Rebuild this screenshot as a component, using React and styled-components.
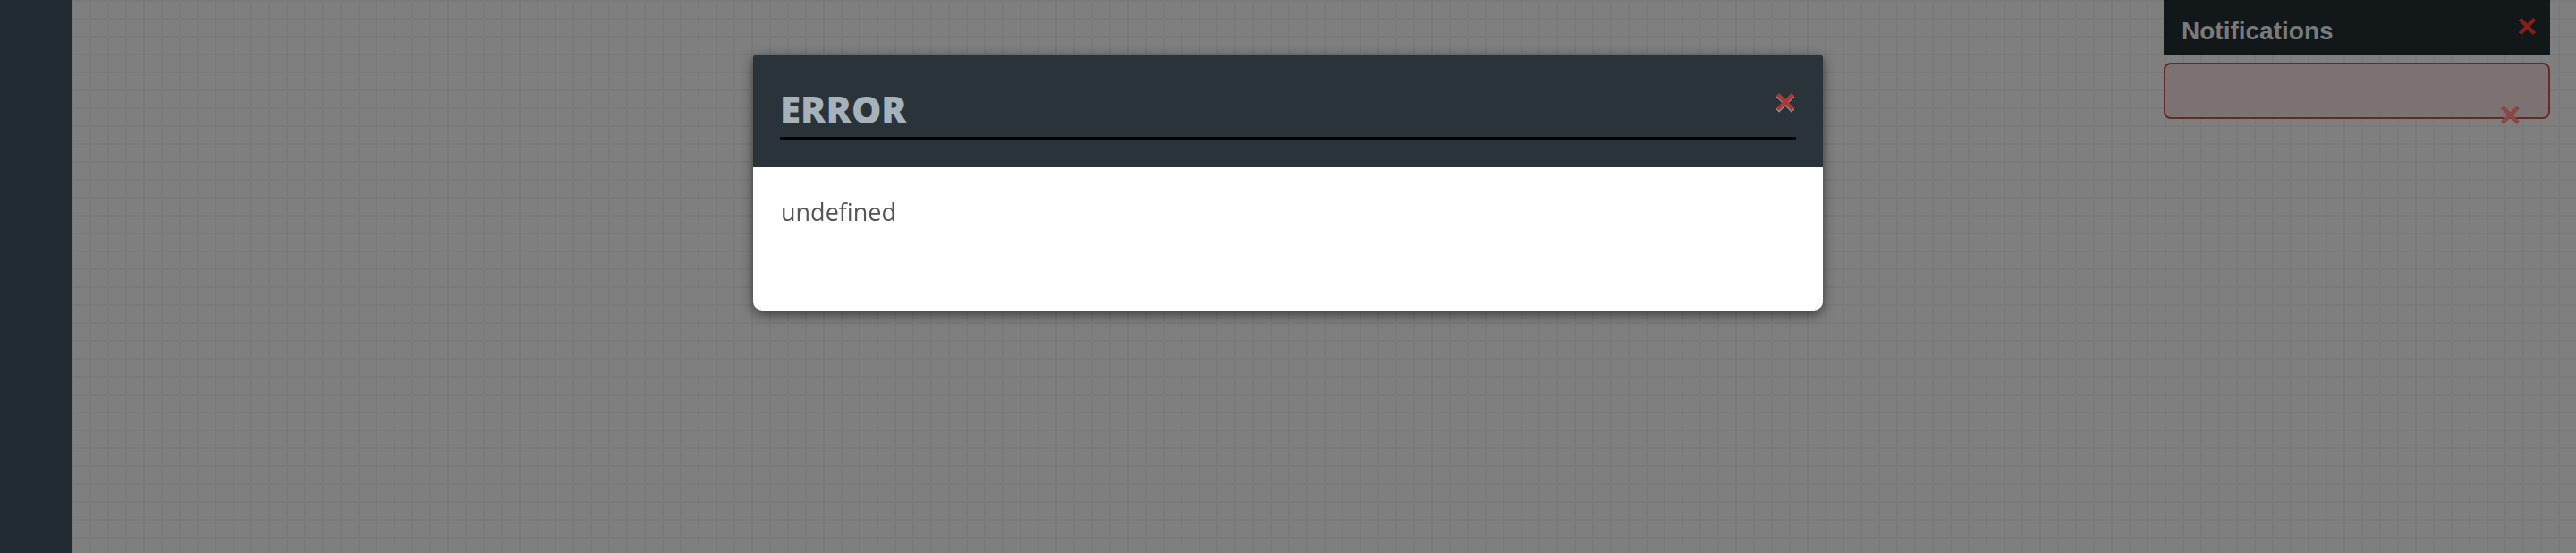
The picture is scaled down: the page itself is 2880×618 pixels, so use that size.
import React from "react";
import styled, { createGlobalStyle } from "styled-components";

const Global = createGlobalStyle`
  html, body { margin: 0; padding: 0; }
  body { font-family: "Open Sans", "Liberation Sans", sans-serif; }
  * { box-sizing: border-box; }
`;

const Page = styled.div`
  position: relative;
  display: flex;
  width: 100%;
  height: 100vh;
  overflow: hidden;
`;

const Sidebar = styled.aside`
  flex: 0 0 80px;
  background: #232b32;
`;

const Canvas = styled.main`
  flex: 1;
  background-color: #7f7f7f;
  background-image:
    linear-gradient(to right, #7a7a7a 2px, transparent 2px),
    linear-gradient(to bottom, #7a7a7a 2px, transparent 2px);
  background-size: 20px 20px;
`;

const NotificationPanel = styled.section`
  position: absolute;
  top: 0;
  right: 29px;
  width: 432px;
  display: flex;
  flex-direction: column;
  gap: 8px;
`;

const NotificationHeader = styled.header`
  height: 62px;
  background: #12171a;
  display: flex;
  justify-content: space-between;
  align-items: flex-start;
  padding: 19px 16px 0 20px;
`;

const NotificationTitle = styled.h2`
  margin: 0;
  font-family: "Liberation Sans", Arial, sans-serif;
  font-weight: 700;
  font-size: 28px;
  line-height: 32px;
  color: #7a7a7a;
`;

const IconButton = styled.button`
  border: 0;
  padding: 0;
  background: none;
  display: block;
  cursor: pointer;
  line-height: 0;
`;

const HeaderClose = styled(IconButton)`
  margin-top: 1px;
`;

const NotificationItem = styled.div`
  position: relative;
  height: 63px;
  border: 2px solid #6a2826;
  border-radius: 8px;
  background: #7b7271;
`;

const ItemClose = styled(IconButton)`
  position: absolute;
  left: 375px;
  top: 46px;
`;

const ModalLayer = styled.div`
  position: fixed;
  inset: 0;
  display: flex;
  justify-content: center;
  align-items: flex-start;
  padding-top: 61px;
`;

const Modal = styled.div`
  width: 1196px;
  border-radius: 3px 3px 10px 10px;
  overflow: hidden;
  background: #fff;
  box-shadow: 0 4px 14px rgba(0, 0, 0, 0.55);
`;

const ModalHeader = styled.div`
  position: relative;
  background: #2b333a;
  padding: 40px 30px 30px;
`;

const ModalTitle = styled.h1`
  margin: 0;
  font-family: "Open Sans", sans-serif;
  font-weight: 800;
  font-size: 42px;
  line-height: 42px;
  color: #a6b2ba;
  padding-bottom: 10px;
  border-bottom: 4px solid #000;
`;

const ModalClose = styled(IconButton)`
  position: absolute;
  top: 43px;
  right: 32px;
`;

const ModalBody = styled.div`
  height: 160px;
  padding: 30px 31px;
  font-family: "Open Sans", sans-serif;
  font-size: 27px;
  line-height: 1.5;
  color: #555;
`;

const Cross = ({ size = 20, color, stroke = 5, shadow }) => (
  <svg width={size} height={size + (shadow ? 2 : 0)} viewBox={`0 0 20 ${20 + (shadow ? 2 : 0)}`}>
    {shadow && (
      <g stroke={shadow} strokeWidth={stroke} transform="translate(0,1.3)">
        <line x1="1.5" y1="1.5" x2="18.5" y2="18.5" />
        <line x1="18.5" y1="1.5" x2="1.5" y2="18.5" />
      </g>
    )}
    <g stroke={color} strokeWidth={stroke}>
      <line x1="1.5" y1="1.5" x2="18.5" y2="18.5" />
      <line x1="18.5" y1="1.5" x2="1.5" y2="18.5" />
    </g>
  </svg>
);

export default function App() {
  return (
    <>
      <Global />
      <Page>
        <Sidebar />
        <Canvas />
        <NotificationPanel>
          <NotificationHeader>
            <NotificationTitle>Notifications</NotificationTitle>
            <HeaderClose aria-label="Close notifications">
              <Cross size={19} color="#8b1c17" stroke={4.5} />
            </HeaderClose>
          </NotificationHeader>
          <NotificationItem>
            <ItemClose aria-label="Dismiss">
              <Cross size={21} color="#8a4845" stroke={4.5} />
            </ItemClose>
          </NotificationItem>
        </NotificationPanel>
        <ModalLayer>
          <Modal>
            <ModalHeader>
              <ModalTitle>ERROR</ModalTitle>
              <ModalClose aria-label="Close">
                <Cross size={20} color="#a83a34" stroke={4.5} shadow="#9aa3a8" />
              </ModalClose>
            </ModalHeader>
            <ModalBody>undefined</ModalBody>
          </Modal>
        </ModalLayer>
      </Page>
    </>
  );
}
